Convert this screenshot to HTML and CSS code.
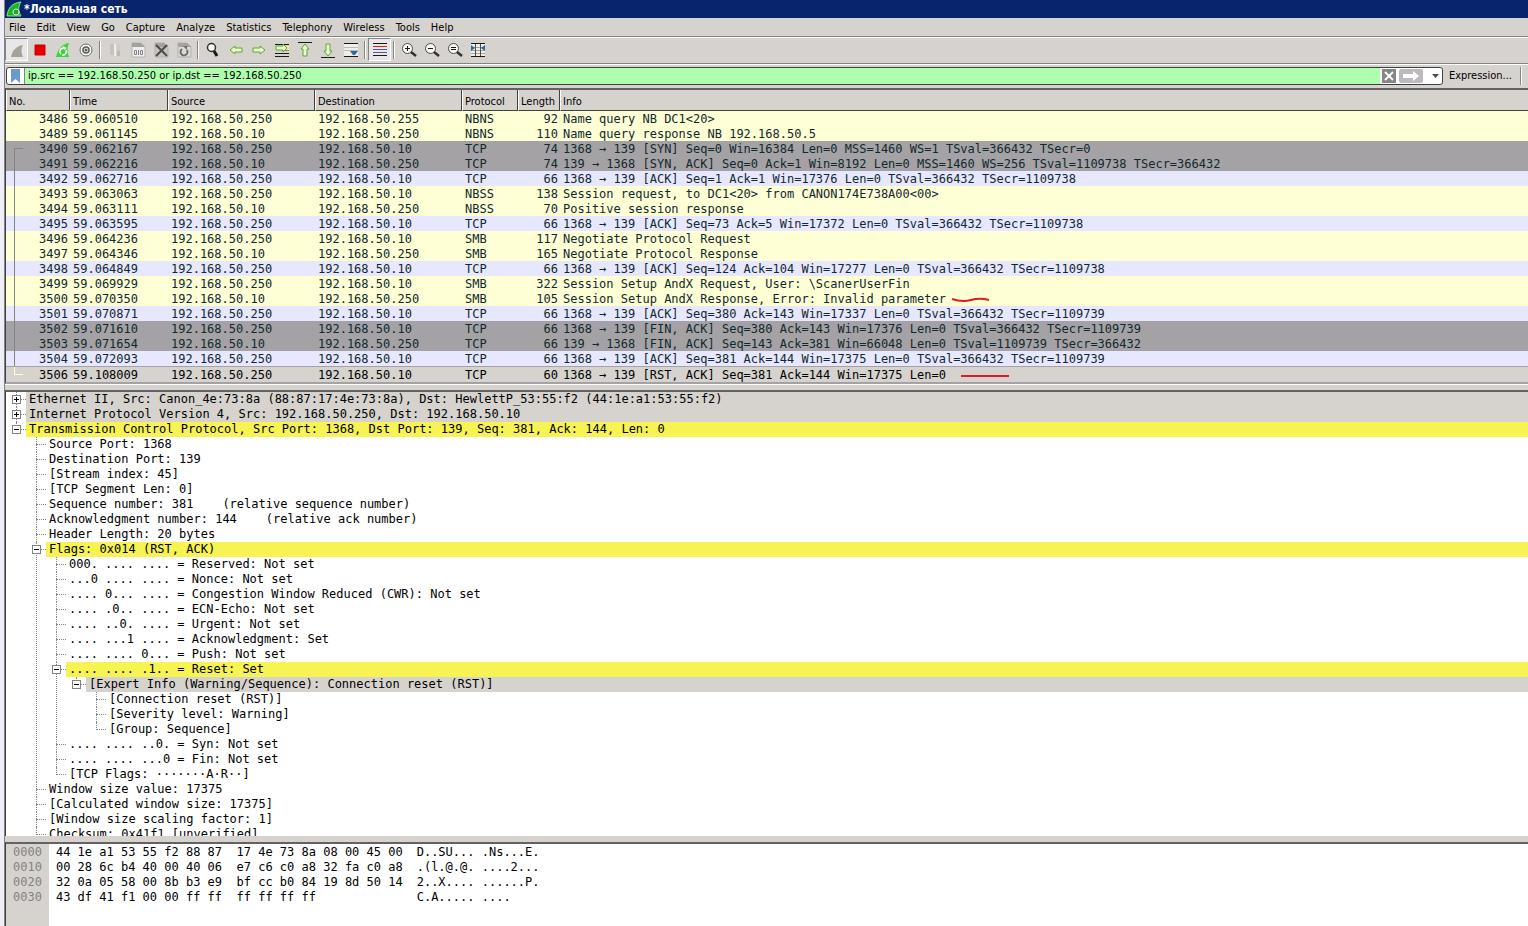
FILE: index.html
```html
<!DOCTYPE html>
<html lang="ru">
<head>
    <meta charset="UTF-8">
    <meta content="width=device-width, initial-scale=1.0" name="viewport">
    <title>*Локальная сеть</title>
    <link rel="stylesheet" href="styles.css">
</head>
<body>
<div class="window">
    <header class="titlebar">
        <svg class="logo" width="16" height="16" viewBox="0 0 16 16">
            <path d="M1 15C2 7 6 2 15 1C12 5 12 10 15 15Z" fill="#19b526" stroke="#8be58b"/>
            <circle cx="10" cy="11" r="3" fill="#2e9e3a" stroke="#d8f7d8"/>
        </svg>
        <h1>*Локальная сеть</h1>
    </header>
    <nav class="menu">
        <button>File</button>
        <button>Edit</button>
        <button>View</button>
        <button>Go</button>
        <button>Capture</button>
        <button>Analyze</button>
        <button>Statistics</button>
        <button>Telephony</button>
        <button>Wireless</button>
        <button>Tools</button>
        <button>Help</button>
    </nav>
    <div class="toolbar">
        <button class="tool pressed" aria-label="Start"><svg viewBox="0 0 16 16"><path d="M2 15C3 9 7 4 14 3C12 6 12 11 14 15Z" fill="#a5a29c"/></svg></button>
        <button class="tool" aria-label="Stop"><svg viewBox="0 0 16 16"><path d="M3 3H13V13H3Z" fill="#e70000" stroke="#c60000"/></svg></button>
        <button class="tool" aria-label="Restart"><svg viewBox="0 0 16 16"><path d="M1 15C3 7 7 2 14 1C12 6 12 10 14 15Z" fill="#39d639"/><path d="M6 12A3.500 3.500 0 0 1 9 6M11 8A3.500 3.500 0 0 1 7 13" fill="none" stroke="#fff" stroke-width="1.500"/><path d="M8 4L12 6L9 8Z" fill="#fff"/></svg></button>
        <button class="tool" aria-label="Options"><svg viewBox="0 0 16 16"><circle cx="8" cy="8" r="6" fill="#f7f7f7" stroke="#6b6d6b"/><circle cx="8" cy="8" r="3" fill="none" stroke="#5a5d5a" stroke-width="1.500"/><circle cx="8" cy="8" r="1.500" fill="#5a5d5a"/></svg></button>
        <span class="sep"></span>
        <button class="tool" aria-label="Open"><svg viewBox="0 0 16 16"><path d="M3 2H7V14L3 12Z" fill="#c6c3bd"/><path d="M7 2H9V14H7Z" fill="#efefe7"/><path d="M10 2H13V14H10Z" fill="#cecbc6"/><path d="M10 9H13V14H10Z" fill="#bdbab5"/></svg></button>
        <button class="tool" aria-label="Save"><svg viewBox="0 0 16 16"><path d="M2 1H11L15 5V15H2Z" fill="#efefef" stroke="#b5b2ad"/><path d="M2 1H11L15 5H2Z" fill="#a5a29c"/><path d="M4.500 8.500H6.500V12.500H4.500ZM8.500 8V13M10.500 8.500H12.500V12.500H10.500Z" fill="none" stroke="#848284"/></svg></button>
        <button class="tool" aria-label="Close file"><svg viewBox="0 0 16 16"><path d="M2 1H11L15 5V15H2Z" fill="#c6c3bd" stroke="#b5b2ad"/><path d="M2 1H11L15 5H2Z" fill="#a5a29c"/><path d="M3 3L14 14M14 3L3 14" stroke="#4a4d4a" stroke-width="2"/></svg></button>
        <button class="tool" aria-label="Reload"><svg viewBox="0 0 16 16"><path d="M2 1H11L15 5V15H2Z" fill="#dedbd6" stroke="#b5b2ad"/><path d="M2 1H11L15 5H2Z" fill="#a5a29c"/><path d="M6 7A3.500 3.500 0 1 0 11 8" fill="none" stroke="#6b6d6b" stroke-width="2"/><path d="M7 4H11V8Z" fill="#6b6d6b"/></svg></button>
        <span class="sep"></span>
        <button class="tool" aria-label="Find"><svg viewBox="0 0 16 16"><circle cx="6.500" cy="5.500" r="4" fill="#f7f7f7" stroke="#313031" stroke-width="1.500"/><path d="M9 9L12 14" stroke="#181818" stroke-width="3"/></svg></button>
        <button class="tool" aria-label="Back"><svg viewBox="0 0 16 16"><path d="M2 8L7 4V6H14V10H7V12Z" class="arrow"/></svg></button>
        <button class="tool" aria-label="Forward"><svg viewBox="0 0 16 16"><path d="M14 8L9 4V6H2V10H9V12Z" class="arrow"/></svg></button>
        <button class="tool" aria-label="Go to packet"><svg viewBox="0 0 16 16"><path d="M1 2.500H15M1 11.500H15M1 14.500H15" stroke="#181818"/><path d="M8 8.500H15" stroke="#848284"/><path d="M10 4H15V8H10Z" fill="#f7eb84"/><path d="M13 6L9 2V4H2V8H9V10Z" class="arrow"/></svg></button>
        <button class="tool" aria-label="First packet"><svg viewBox="0 0 16 16"><path d="M1 .500H15" stroke="#181818"/><path d="M8 2L12 7H10V14H6V7H4Z" class="arrow"/></svg></button>
        <button class="tool" aria-label="Last packet"><svg viewBox="0 0 16 16"><path d="M1 15.500H15" stroke="#181818"/><path d="M8 14L12 9H10V2H6V9H4Z" class="arrow"/></svg></button>
        <button class="tool" aria-label="Auto scroll"><svg viewBox="0 0 16 16"><path d="M1 2H15V14H1Z" fill="#efefe7"/><path d="M1 1.500H15M1 14.500H15" stroke="#181818"/><path d="M1 5.500H15M1 8.500H15" stroke="#bdbab5"/><path d="M7 9H15L12 13H10Z" fill="#3165a5"/></svg></button>
        <span class="sep"></span>
        <button class="tool pressed" aria-label="Colorize"><svg viewBox="0 0 16 16"><path d="M1 1.500H15M1 13.500H15" stroke="#181818"/><path d="M1 4.500H15" stroke="#e71821"/><path d="M1 7.500H15" stroke="#316ba5"/><path d="M1 10.500H15" stroke="#73498c"/></svg></button>
        <span class="sep"></span>
        <button class="tool" aria-label="Zoom in"><svg viewBox="0 0 16 16"><circle cx="6.500" cy="6.500" r="5" class="lens"/><path d="M4 6.500H9M6.500 4V9" stroke="#181818"/><path d="M10 10L15 14" stroke="#313031" stroke-width="2.500"/></svg></button>
        <button class="tool" aria-label="Zoom out"><svg viewBox="0 0 16 16"><circle cx="6.500" cy="6.500" r="5" class="lens"/><path d="M4 6.500H9" stroke="#181818"/><path d="M10 10L15 14" stroke="#313031" stroke-width="2.500"/></svg></button>
        <button class="tool" aria-label="Normal size"><svg viewBox="0 0 16 16"><circle cx="6.500" cy="6.500" r="5" class="lens"/><path d="M4 5.500H9M4 7.500H9" stroke="#181818"/><path d="M10 10L15 14" stroke="#313031" stroke-width="2.500"/></svg></button>
        <button class="tool" aria-label="Resize columns"><svg viewBox="0 0 16 16"><path d="M1 2H15V14H1Z" fill="#efefe7"/><path d="M1 1.500H15M1 14.500H15" stroke="#181818"/><path d="M1 5.500H15M1 8.500H15M1 11.500H15" stroke="#a5a29c"/><path d="M5.500 2V14M10.500 2V14" stroke="#4a4d4a"/><path d="M1 3L5 6L1 9ZM15 3L11 6L15 9Z" fill="#3165a5"/></svg></button>
    </div>
    <div class="filterbar">
        <div class="filter">
            <button class="bookmark" aria-label="Bookmark"><svg width="9" height="14" viewBox="0 0 9 14"><path d="M0 0H9V14L4.500 10L0 14Z" fill="#6b9ace"/></svg></button>
            <input type="text" aria-label="Display filter" value="ip.src == 192.168.50.250 or ip.dst == 192.168.50.250">
            <button class="clear" aria-label="Clear"><svg width="14" height="14" viewBox="0 0 14 14"><path d="M0 0H14V14H0Z" fill="#848684"/><path d="M3 3L11 11M11 3L3 11" stroke="#fff" stroke-width="2"/></svg></button>
            <button class="apply" aria-label="Apply"><svg width="24" height="14" viewBox="0 0 24 14"><rect width="24" height="14" rx="2" fill="#bdbabd"/><path d="M4 5H14V2L20 7L14 12V9H4Z" fill="#fff"/></svg></button>
            <button class="history" aria-label="Recent filters"><svg width="7" height="4" viewBox="0 0 7 4"><path d="M0 0H7L3.500 4Z" fill="#4a4d4a"/></svg></button>
        </div>
        <button class="expression">Expression...</button>
        <span class="sep"></span>
    </div>

    <section class="packets">
        <table>
            <colgroup>
                <col class="c-no">
                <col class="c-time">
                <col class="c-addr">
                <col class="c-addr">
                <col class="c-proto">
                <col class="c-len">
                <col>
            </colgroup>
            <thead>
            <tr><th>No.</th><th>Time</th><th>Source</th><th>Destination</th><th>Protocol</th><th>Length</th><th>Info</th></tr>
            </thead>
            <tbody>
            <tr class="smb"><td>3486</td><td>59.060510</td><td>192.168.50.250</td><td>192.168.50.255</td><td>NBNS</td><td>92</td><td>Name query NB DC1&lt;20&gt;</td></tr>
            <tr class="smb"><td>3489</td><td>59.061145</td><td>192.168.50.10</td><td>192.168.50.250</td><td>NBNS</td><td>110</td><td>Name query response NB 192.168.50.5</td></tr>
            <tr class="syn rel first"><td>3490</td><td>59.062167</td><td>192.168.50.250</td><td>192.168.50.10</td><td>TCP</td><td>74</td><td>1368 → 139 [SYN] Seq=0 Win=16384 Len=0 MSS=1460 WS=1 TSval=366432 TSecr=0</td></tr>
            <tr class="syn rel"><td>3491</td><td>59.062216</td><td>192.168.50.10</td><td>192.168.50.250</td><td>TCP</td><td>74</td><td>139 → 1368 [SYN, ACK] Seq=0 Ack=1 Win=8192 Len=0 MSS=1460 WS=256 TSval=1109738 TSecr=366432</td></tr>
            <tr class="tcp rel"><td>3492</td><td>59.062716</td><td>192.168.50.250</td><td>192.168.50.10</td><td>TCP</td><td>66</td><td>1368 → 139 [ACK] Seq=1 Ack=1 Win=17376 Len=0 TSval=366432 TSecr=1109738</td></tr>
            <tr class="smb rel"><td>3493</td><td>59.063063</td><td>192.168.50.250</td><td>192.168.50.10</td><td>NBSS</td><td>138</td><td>Session request, to DC1&lt;20&gt; from CANON174E738A00&lt;00&gt;</td></tr>
            <tr class="smb rel"><td>3494</td><td>59.063111</td><td>192.168.50.10</td><td>192.168.50.250</td><td>NBSS</td><td>70</td><td>Positive session response</td></tr>
            <tr class="tcp rel"><td>3495</td><td>59.063595</td><td>192.168.50.250</td><td>192.168.50.10</td><td>TCP</td><td>66</td><td>1368 → 139 [ACK] Seq=73 Ack=5 Win=17372 Len=0 TSval=366432 TSecr=1109738</td></tr>
            <tr class="smb rel"><td>3496</td><td>59.064236</td><td>192.168.50.250</td><td>192.168.50.10</td><td>SMB</td><td>117</td><td>Negotiate Protocol Request</td></tr>
            <tr class="smb rel"><td>3497</td><td>59.064346</td><td>192.168.50.10</td><td>192.168.50.250</td><td>SMB</td><td>165</td><td>Negotiate Protocol Response</td></tr>
            <tr class="tcp rel"><td>3498</td><td>59.064849</td><td>192.168.50.250</td><td>192.168.50.10</td><td>TCP</td><td>66</td><td>1368 → 139 [ACK] Seq=124 Ack=104 Win=17277 Len=0 TSval=366432 TSecr=1109738</td></tr>
            <tr class="smb rel"><td>3499</td><td>59.069929</td><td>192.168.50.250</td><td>192.168.50.10</td><td>SMB</td><td>322</td><td>Session Setup AndX Request, User: \ScanerUserFin</td></tr>
            <tr class="smb rel"><td>3500</td><td>59.070350</td><td>192.168.50.10</td><td>192.168.50.250</td><td>SMB</td><td>105</td><td>Session Setup AndX Response, Error: Invalid parameter<svg class="mark" width="60" height="8" viewBox="0 0 60 8"><path d="M6 3C12 5 18 6 25 4S36 2 43 4" fill="none" stroke="#e71821" stroke-width="2"/></svg></td></tr>
            <tr class="tcp rel"><td>3501</td><td>59.070871</td><td>192.168.50.250</td><td>192.168.50.10</td><td>TCP</td><td>66</td><td>1368 → 139 [ACK] Seq=380 Ack=143 Win=17337 Len=0 TSval=366432 TSecr=1109739</td></tr>
            <tr class="syn rel"><td>3502</td><td>59.071610</td><td>192.168.50.250</td><td>192.168.50.10</td><td>TCP</td><td>66</td><td>1368 → 139 [FIN, ACK] Seq=380 Ack=143 Win=17376 Len=0 TSval=366432 TSecr=1109739</td></tr>
            <tr class="syn rel"><td>3503</td><td>59.071654</td><td>192.168.50.10</td><td>192.168.50.250</td><td>TCP</td><td>66</td><td>139 → 1368 [FIN, ACK] Seq=143 Ack=381 Win=66048 Len=0 TSval=1109739 TSecr=366432</td></tr>
            <tr class="tcp rel"><td>3504</td><td>59.072093</td><td>192.168.50.250</td><td>192.168.50.10</td><td>TCP</td><td>66</td><td>1368 → 139 [ACK] Seq=381 Ack=144 Win=17375 Len=0 TSval=366432 TSecr=1109739</td></tr>
            <tr class="selected rel last"><td>3506</td><td>59.108009</td><td>192.168.50.250</td><td>192.168.50.10</td><td>TCP</td><td>60</td><td>1368 → 139 [RST, ACK] Seq=381 Ack=144 Win=17375 Len=0<svg class="mark" width="64" height="8" viewBox="0 0 64 8"><path d="M15 4H63" stroke="#e71821" stroke-width="2"/></svg></td></tr>
            </tbody>
        </table>
    </section>

    <section class="details">
        <ul class="tree">
            <li><div class="row shade"><button class="toggle" aria-label="Expand"></button><span>Ethernet II, Src: Canon_4e:73:8a (88:87:17:4e:73:8a), Dst: HewlettP_53:55:f2 (44:1e:a1:53:55:f2)</span></div></li>
            <li><div class="row shade"><button class="toggle" aria-label="Expand"></button><span>Internet Protocol Version 4, Src: 192.168.50.250, Dst: 192.168.50.10</span></div></li>
            <li><div class="row warn"><button class="toggle open" aria-label="Collapse"></button><span>Transmission Control Protocol, Src Port: 1368, Dst Port: 139, Seq: 381, Ack: 144, Len: 0</span></div>
                <ul>
                    <li><div class="row"><span>Source Port: 1368</span></div></li>
                    <li><div class="row"><span>Destination Port: 139</span></div></li>
                    <li><div class="row"><span>[Stream index: 45]</span></div></li>
                    <li><div class="row"><span>[TCP Segment Len: 0]</span></div></li>
                    <li><div class="row"><span>Sequence number: 381    (relative sequence number)</span></div></li>
                    <li><div class="row"><span>Acknowledgment number: 144    (relative ack number)</span></div></li>
                    <li><div class="row"><span>Header Length: 20 bytes</span></div></li>
                    <li><div class="row warn"><button class="toggle open" aria-label="Collapse"></button><span>Flags: 0x014 (RST, ACK)</span></div>
                        <ul>
                            <li><div class="row"><span>000. .... .... = Reserved: Not set</span></div></li>
                            <li><div class="row"><span>...0 .... .... = Nonce: Not set</span></div></li>
                            <li><div class="row"><span>.... 0... .... = Congestion Window Reduced (CWR): Not set</span></div></li>
                            <li><div class="row"><span>.... .0.. .... = ECN-Echo: Not set</span></div></li>
                            <li><div class="row"><span>.... ..0. .... = Urgent: Not set</span></div></li>
                            <li><div class="row"><span>.... ...1 .... = Acknowledgment: Set</span></div></li>
                            <li><div class="row"><span>.... .... 0... = Push: Not set</span></div></li>
                            <li><div class="row warn"><button class="toggle open" aria-label="Collapse"></button><span>.... .... .1.. = Reset: Set</span></div>
                                <ul>
                                    <li><div class="row shade"><button class="toggle open" aria-label="Collapse"></button><span>[Expert Info (Warning/Sequence): Connection reset (RST)]</span></div>
                                        <ul>
                                            <li><div class="row"><span>[Connection reset (RST)]</span></div></li>
                                            <li><div class="row"><span>[Severity level: Warning]</span></div></li>
                                            <li><div class="row"><span>[Group: Sequence]</span></div></li>
                                        </ul>
                                    </li>
                                </ul>
                            </li>
                            <li><div class="row"><span>.... .... ..0. = Syn: Not set</span></div></li>
                            <li><div class="row"><span>.... .... ...0 = Fin: Not set</span></div></li>
                            <li><div class="row"><span>[TCP Flags: ·······A·R··]</span></div></li>
                        </ul>
                    </li>
                    <li><div class="row"><span>Window size value: 17375</span></div></li>
                    <li><div class="row"><span>[Calculated window size: 17375]</span></div></li>
                    <li><div class="row"><span>[Window size scaling factor: 1]</span></div></li>
                    <li><div class="row"><span>Checksum: 0x41f1 [unverified]</span></div></li>
                </ul>
            </li>
        </ul>
    </section>

    <section class="bytes">
        <pre class="offsets">0000
0010
0020
0030</pre>
        <pre class="hex">44 1e a1 53 55 f2 88 87  17 4e 73 8a 08 00 45 00
00 28 6c b4 40 00 40 06  e7 c6 c0 a8 32 fa c0 a8
32 0a 05 58 00 8b b3 e9  bf cc b0 84 19 8d 50 14
43 df 41 f1 00 00 ff ff  ff ff ff ff</pre>
        <pre class="ascii">D..SU... .Ns...E.
.(l.@.@. ....2...
2..X.... ......P.
C.A..... ....</pre>
    </section>
</div>
</body>
</html>
```

FILE: styles.css
```css
* {
    box-sizing: border-box;
}

body {
    margin: 0;
    background: #efeff7;
    font: 11px "DejaVu Sans Condensed", "DejaVu Sans", sans-serif;
    color: #000;
}

button {
    padding: 0;
    border: 0;
    background: none;
    font: inherit;
    color: inherit;
}

.window {
    display: flex;
    flex-direction: column;
    height: 100vh;
    margin-left: 4px;
    overflow: hidden;
    border-left: 1px solid #848284;
    background: #d6d3ce;
}

.titlebar {
    display: flex;
    flex: none;
    align-items: center;
    gap: 2px;
    height: 18px;
    padding-left: 1px;
    background: #08246b;
    color: #fff;
}

.titlebar h1 {
    margin: 0;
    font-size: 12px;
}

.menu {
    display: flex;
    flex: none;
    gap: 11px;
    height: 19px;
    padding: 1px 0 0 4px;
    border-bottom: 1px solid #848284;
}

.toolbar {
    display: flex;
    flex: none;
    align-items: center;
    height: 27px;
    padding-bottom: 2px;
    border-top: 1px solid #fff;
    border-bottom: 1px solid #848284;
}

.tool {
    display: flex;
    align-items: center;
    justify-content: center;
    width: 23px;
    height: 23px;
}

.tool svg {
    width: 16px;
    height: 16px;
}

.pressed {
    border: 1px solid;
    border-color: #848284 #fff #fff #848284;
    background: #e7e7e7;
}

.arrow {
    fill: #e7f7d6;
    stroke: #63a629;
}

.lens {
    fill: #f7f7f7;
    stroke: #4a4d4a;
}

.sep {
    flex: none;
    width: 2px;
    height: 18px;
    margin: 0 2px;
    border-left: 1px solid #848284;
    border-right: 1px solid #fff;
}

.filterbar {
    display: flex;
    flex: none;
    align-items: center;
    height: 24px;
    padding: 0 4px 2px 1px;
    border-top: 1px solid #fff;
}

.filter {
    display: flex;
    flex: 1;
    align-items: center;
    height: 18px;
    overflow: hidden;
    border: 1px solid #424142;
    border-radius: 3px;
    background: #fff;
}

.filter button {
    display: flex;
}

.bookmark {
    justify-content: center;
    width: 17px;
}

.filter input {
    flex: 1;
    height: 16px;
    padding: 0 3px;
    border: 0;
    border-left: 1px solid #848284;
    background: #adffad;
    font: inherit;
}

.clear {
    padding: 0 2px;
}

.apply {
    margin-left: 1px;
}

.history {
    padding: 0 3px 0 9px;
}

.expression {
    margin: 0 6px;
}

.packets,
.details,
.bytes {
    flex: none;
    overflow: hidden;
    border-top: 2px solid #636163;
    border-left: 1px solid #424142;
    font: 12px/15px "DejaVu Sans Mono", monospace;
}

.packets {
    border-bottom: 2px solid #a5a2a5;
    box-shadow: 0 1px #fff;
}

.packets table {
    width: 100%;
    table-layout: fixed;
    border-collapse: separate;
    border-spacing: 0;
}

.c-no {
    width: 64px;
}

.c-time {
    width: 98px;
}

.c-addr {
    width: 147px;
}

.c-proto {
    width: 56px;
}

.c-len {
    width: 42px;
}

.packets th {
    height: 21px;
    padding: 2px 2px 0;
    border-left: 1px solid #fff;
    border-right: 1px solid #424142;
    border-bottom: 1px solid #424142;
    font: 11px "DejaVu Sans Condensed", "DejaVu Sans", sans-serif;
    text-align: left;
}

.packets th:last-child {
    border-right: 0;
}

.packets td {
    height: 15px;
    padding: 2px 3px 0;
    overflow: hidden;
    line-height: 13px;
    white-space: nowrap;
}

.packets td:first-child,
.packets td:nth-child(6) {
    padding-right: 2px;
    text-align: right;
}

.smb {
    background: #ffffd6;
    color: #10292e;
}

.tcp {
    background: #e7e7ff;
    color: #10292e;
}

.syn {
    background: #a5a2a5;
    color: #10292e;
}

.selected td {
    height: 16px;
    border-top: 1px solid #a5a2a5;
}

/* line that joins the packets of one conversation */
.rel td:first-child {
    position: relative;
}

.rel td:first-child::before {
    content: "";
    position: absolute;
    top: 0;
    bottom: 0;
    left: 8px;
    width: 8px;
    border-left: 1px solid #848684;
}

.first td:first-child::before {
    top: 7px;
    border-top: 1px solid #848684;
}

.last td:first-child::before {
    bottom: 7px;
    border-color: #ffffd6;
    border-bottom: 1px solid #ffffd6;
}

.mark {
    vertical-align: middle;
}

.details {
    flex: 1;
    min-height: 0;
    margin-top: 6px;
    background: #fff;
}

.tree,
.tree ul {
    margin: 0;
    padding: 0;
    list-style: none;
}

.tree ul {
    padding-left: 20px;
}

.tree li {
    position: relative;
}

.tree li::before {
    content: "";
    position: absolute;
    top: 0;
    bottom: 0;
    left: 10px;
    border-left: 1px dotted #848284;
}

.tree li:last-child::before {
    bottom: auto;
    height: 8px;
}

.row {
    display: flex;
    position: relative;
    align-items: center;
    height: 15px;
    padding-left: 20px;
}

.row::before {
    content: "";
    position: absolute;
    top: 7px;
    left: 10px;
    width: 10px;
    border-top: 1px dotted #848284;
}

.row span {
    flex: 1;
    padding-left: 3px;
    white-space: pre;
}

.shade span {
    background: #d6d3ce;
}

.warn span {
    background: #f7f352;
}

.toggle {
    position: absolute;
    left: 6px;
    width: 9px;
    height: 9px;
    border: 1px solid #848284;
    background: linear-gradient(#000, #000) center / 5px 1px no-repeat, linear-gradient(#000, #000) center / 1px 5px no-repeat, #fff;
}

.toggle.open {
    background: linear-gradient(#000, #000) center / 5px 1px no-repeat, #fff;
}

.bytes {
    display: flex;
    height: 84px;
    margin-top: 6px;
    background: #fff;
}

.bytes pre {
    margin: 0;
    padding-top: 1px;
    font: inherit;
}

.bytes .offsets {
    padding: 1px 7px 0;
    background: #d6d3ce;
    color: #848284;
}

.bytes .hex {
    padding: 1px 14px 0 7px;
}
```
